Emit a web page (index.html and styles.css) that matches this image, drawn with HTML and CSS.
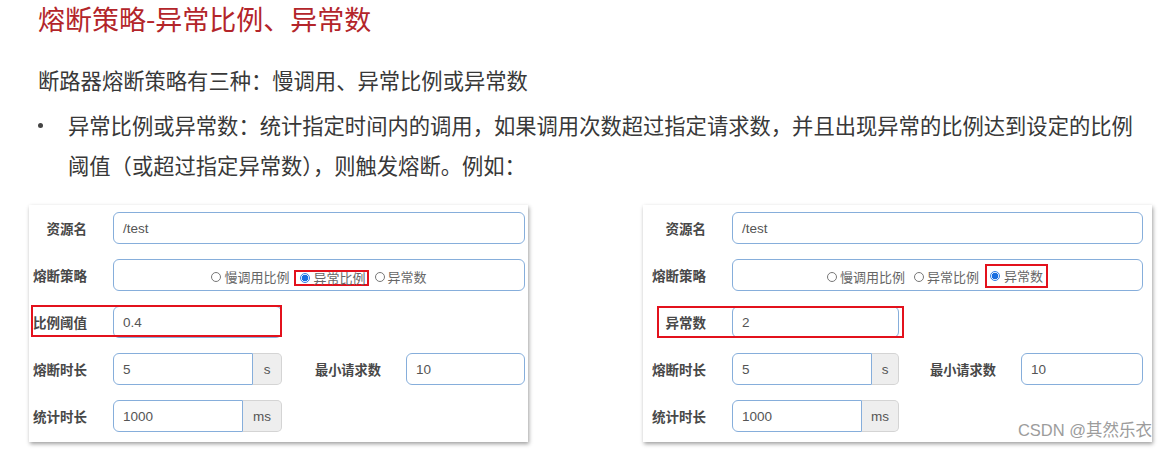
FILE: index.html
```html
<!DOCTYPE html>
<html lang="zh-CN">
<head>
<meta charset="utf-8">
<title>熔断策略-异常比例、异常数</title>
<link rel="stylesheet" href="styles.css">
</head>
<body>
<div class="page">
  <h1 class="title">熔断策略-异常比例、异常数</h1>
  <p class="lead">断路器熔断策略有三种：慢调用、异常比例或异常数</p>
  <ul class="points">
    <li>异常比例或异常数：统计指定时间内的调用，如果调用次数超过指定请求数，并且出现异常的比例达到设定的比例阈值（或超过指定异常数），则触发熔断。例如：</li>
  </ul>

  <div class="cards">
    <div class="card card-a">
      <div class="row">
        <span class="lbl">资源名</span>
        <div class="field wide">/test</div>
      </div>
      <div class="row">
        <span class="lbl">熔断策略</span>
        <div class="field wide radios">
          <span class="opt"><i class="radio"></i>慢调用比例</span>
          <span class="opt hl hl-a"><i class="radio on"></i>异常比例</span>
          <span class="opt"><i class="radio"></i>异常数</span>
        </div>
      </div>
      <div class="row">
        <span class="lbl">比例阈值</span>
        <div class="field grp-w">0.4</div>
        <span class="mark mark-a"></span>
      </div>
      <div class="row">
        <span class="lbl">熔断时长</span>
        <div class="grp">
          <div class="field in">5</div><span class="addon a-s">s</span>
        </div>
        <span class="lbl2">最小请求数</span>
        <div class="field wide">10</div>
      </div>
      <div class="row">
        <span class="lbl">统计时长</span>
        <div class="grp">
          <div class="field in">1000</div><span class="addon a-ms">ms</span>
        </div>
      </div>
    </div>

    <div class="card card-b">
      <div class="row">
        <span class="lbl">资源名</span>
        <div class="field wide">/test</div>
      </div>
      <div class="row">
        <span class="lbl">熔断策略</span>
        <div class="field wide radios">
          <span class="opt"><i class="radio"></i>慢调用比例</span>
          <span class="opt"><i class="radio"></i>异常比例</span>
          <span class="opt hl hl-b"><i class="radio on"></i>异常数</span>
        </div>
      </div>
      <div class="row">
        <span class="lbl">异常数</span>
        <div class="field grp-w">2</div>
        <span class="mark mark-b"></span>
      </div>
      <div class="row">
        <span class="lbl">熔断时长</span>
        <div class="grp">
          <div class="field in">5</div><span class="addon b-s">s</span>
        </div>
        <span class="lbl2">最小请求数</span>
        <div class="field wide">10</div>
      </div>
      <div class="row">
        <span class="lbl">统计时长</span>
        <div class="grp">
          <div class="field in">1000</div><span class="addon b-ms">ms</span>
        </div>
      </div>
    </div>
  </div>

  <div class="watermark">CSDN @其然乐衣</div>
</div>
</body>
</html>
```

FILE: styles.css
```css
* { box-sizing: border-box; }

body {
  margin: 0;
  background: #fff;
  font-family: "Noto Sans CJK SC", "Noto Sans", sans-serif;
}

.page {
  position: relative;
  height: 449px;
  overflow: hidden;
}

.title {
  margin: 0 0 0 38px;
  font-size: 27px;
  font-weight: 400;
  line-height: 37px;
  color: #b3252a;
}

.lead {
  margin: 23px 0 0 38px;
  font-size: 21.3px;
  line-height: 40px;
  color: #383838;
}

.points {
  list-style: none;
  margin: 5px 0 0;
  padding: 0 0 0 68px;
  font-size: 21.3px;
  line-height: 40px;
  color: #383838;
}

.points li {
  position: relative;
  width: 50.5em;
}

.points li::before {
  content: "";
  position: absolute;
  left: -30px;
  top: 18px;
  width: 5px;
  height: 5px;
  border-radius: 50%;
  background: #444;
}

/* ---- form cards ---- */
.cards {
  display: flex;
  gap: 115px;
  margin: 20px 0 0 29px;
  align-items: flex-start;
}

.card {
  background: #fff;
  box-shadow: 1px 2px 4px rgba(0, 0, 0, 0.38);
  padding: 7px var(--pr) 10px 0;
  display: flex;
  flex-direction: column;
  gap: 15px;
}

.card-a { width: 499px; --lw: 58px; --pr: 3px; --gw: 169px; --l2: 33px; }
.card-b { width: 509px; --lw: 63px; --pr: 9px; --gw: 167px; --l2: 31px; }

.row {
  position: relative;
  display: flex;
  align-items: center;
  height: 32px;
}

.lbl {
  flex: none;
  width: var(--lw);
  margin-right: 26px;
  text-align: right;
  font-size: 13.5px;
  font-weight: 700;
  color: #484848;
  white-space: nowrap;
}

.lbl2 {
  flex: none;
  width: 65px;
  margin: 0 26px 0 var(--l2);
  font-size: 13.2px;
  font-weight: 700;
  color: #484848;
  white-space: nowrap;
}

.field {
  height: 32px;
  border: 1px solid #86aedb;
  border-radius: 6px;
  padding: 0 9px;
  display: flex;
  align-items: center;
  font-family: "Liberation Sans", Arial, sans-serif;
  font-size: 13.5px;
  color: #555;
  background: #fff;
}

.wide { flex: 1; }
.grp-w { width: var(--gw); flex: none; }

.grp {
  flex: none;
  width: var(--gw);
  display: flex;
}

.grp .in {
  flex: 1;
  border-radius: 6px 0 0 6px;
}

.addon {
  flex: none;
  height: 32px;
  display: flex;
  align-items: center;
  justify-content: center;
  background: #eee;
  border: 1px solid #d4d4d4;
  border-left: 0;
  border-radius: 0 5px 5px 0;
  font-family: "Liberation Sans", Arial, sans-serif;
  font-size: 13.5px;
  color: #555;
}

.a-s { width: 29px; }
.a-ms { width: 39px; }
.b-s { width: 27px; }
.b-ms { width: 37px; }

/* radios */
.radios {
  justify-content: center;
  gap: 9px;
  padding-top: 3px;
  font-family: "Noto Sans CJK SC", sans-serif;
  font-size: 13px;
  color: #666;
}

.opt {
  display: inline-flex;
  align-items: center;
  gap: 3px;
  white-space: nowrap;
  line-height: 14px;
}

.radio {
  display: inline-block;
  width: 10px;
  height: 10px;
  border: 1px solid #777;
  border-radius: 50%;
  background: #fff;
}

.radio.on {
  border-color: #2f7fe6;
  background: radial-gradient(circle, #1a6fe0 0 3px, #fff 3.6px);
}

.hl {
  border: 2px solid #e3111c;
}

.hl-a {
  height: 16px;
  line-height: 12px;
  padding: 0 1px 0 4px;
  margin: 2px -3px 0 -4px;
}

.hl-b {
  height: 24px;
  padding: 0 3px;
  gap: 4px;
  margin: -2px 0 0 -3px;
}

/* red highlight annotation around a row */
.mark {
  position: absolute;
  border: 2px solid #e3111c;
  height: 32px;
  pointer-events: none;
}

.mark-a { left: 2px; top: -1px; width: 251px; }
.mark-b { left: 14px; top: 0; width: 247px; }

.watermark {
  position: absolute;
  right: 16px;
  top: 419px;
  font-family: "Liberation Sans", "Noto Sans CJK SC", sans-serif;
  font-size: 16.5px;
  line-height: 22px;
  color: #9c9c9c;
  text-shadow: 0 0 2px #fff;
}
```
